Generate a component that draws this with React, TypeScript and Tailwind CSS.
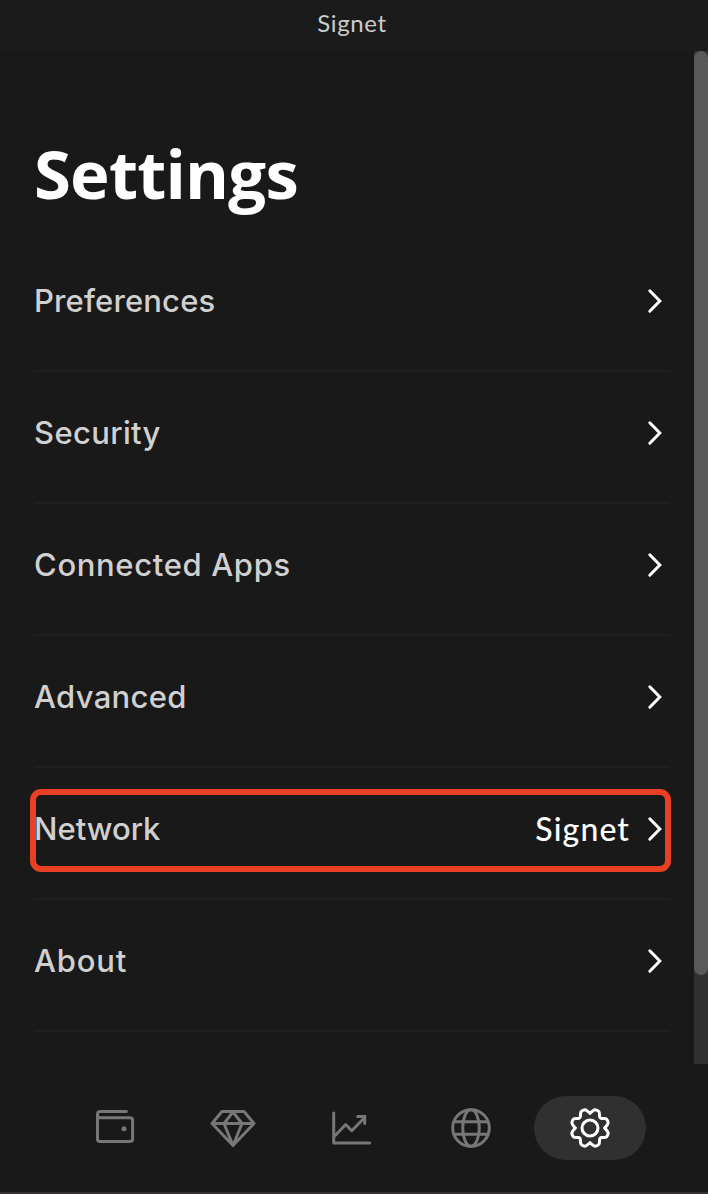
import type { ReactNode } from "react";

const rows = [
  { label: "Preferences", cls: "tracking-[0.15px]" },
  { label: "Security", cls: "tracking-[0.35px]" },
  { label: "Connected Apps", cls: "tracking-[0.65px]" },
  { label: "Advanced", cls: "tracking-[0.3px]" },
  { label: "Network", cls: "tracking-[0px]", value: "Signet" },
  { label: "About", cls: "tracking-[0.8px]" },
];

function Chevron() {
  return (
    <svg className="h-[26px] w-4" viewBox="0 0 16 26" fill="none" stroke="#fff" strokeWidth="3" strokeLinecap="round">
      <path d="M2.8 2.8 12.8 13 2.8 23.2" />
    </svg>
  );
}

function Icon({ children, active = false }: { children: ReactNode; active?: boolean }) {
  return (
    <svg
      className={active ? "size-12 text-white" : "size-12 text-[#777777]"}
      viewBox="-24 -24 48 48"
      fill="none"
      stroke="currentColor"
      strokeWidth="3"
      strokeLinecap="round"
      strokeLinejoin="round"
    >
      {children}
    </svg>
  );
}

const quarter =
  "M0-14.8 L3.2-17.4 Q4.7-18.6 6.4-17.9 L7.6-17.4 Q9.3-16.7 9.4-14.8 L9.6-11.6 Q9.8-9.8 11.6-9.6 L14.8-9.4 Q16.7-9.3 17.4-7.6 L17.9-6.4 Q18.6-4.7 17.4-3.2 L14.8 0";

export default function App() {
  return (
    <div className="flex h-[1194px] w-[708px] flex-col overflow-hidden bg-[#191919] font-['Inter',sans-serif]">
      <header className="flex h-[51px] items-center justify-center bg-[#1b1b1b] pb-[5px] pr-1">
        <span className="font-['Lato',sans-serif] text-[24px] leading-8 tracking-[0.6px] text-[#cccccc]">Signet</span>
      </header>
      <div className="flex h-[1013px]">
        <main className="w-[694px] pl-[34px] pr-[24px]">
          <h1 className="h-[189px] pt-[74px] font-['Open_Sans',sans-serif] text-[67px] font-bold leading-[96px] tracking-[-0.8px] text-white">
            <span>Settings</span>
          </h1>
          {rows.map((r) => (
            <div key={r.label} className="relative flex h-[132px] items-center justify-between border-b-2 border-[#1f1f1f] pb-2 pr-[7px] text-[31px] font-medium leading-10 text-[#d0d0d0]">
              <span className={r.cls}>{r.label}</span>
              <div className="flex items-center gap-[17px]">
                {r.value && <span className="font-['Lato',sans-serif] text-[32px] font-medium tracking-[1.1px] text-white">{r.value}</span>}
                <Chevron />
              </div>
              {r.value && <div className="absolute -left-1 -right-[1px] top-[21px] h-[83px] rounded-[11px] border-[6px] border-[#e93f24]" />}
            </div>
          ))}
        </main>
        <div className="w-[14px] bg-[#303030]">
          <div className="h-[924px] rounded-[7px] bg-[#595959]" />
        </div>
      </div>
      <nav className="flex h-[128px] items-center pl-[55px]">
        <div className="flex w-[118px] justify-center"><Icon>
          <path d="M12.4-16.5H-13.7Q-16.5-16.5-16.5-13.7V11.3Q-16.5 13.6-13.7 13.6H15.8Q18.6 13.6 18.6 11.3V-8Q18.6-10.3 15.8-10.3H-13.7Q-16.5-10.3-16.5-13.1" />
          <circle cx="10" cy="0.8" r="2.5" fill="currentColor" stroke="none" />
        </Icon></div>
        <div className="flex w-[119px] justify-center"><Icon>
          <path d="M-11-16.5H11L21-4.5 0 17.5-21-4.5ZM-21-4.5H21M0-16-9-4.5 0 17.5 9-4.5Z" />
        </Icon></div>
        <div className="flex w-[119px] justify-center"><Icon>
          <path d="M-18.3-15V15H17.7M-17.3 8-6.3-3.5-0.3 2.7 11.7-9.5" />
          <path d="M5.7-11.5H12.7V-4.5" strokeLinejoin="miter" />
        </Icon></div>
        <div className="flex w-[119px] justify-center"><Icon>
          <circle r="18.3" />
          <ellipse rx="8.3" ry="18.3" />
          <path d="M-17-6.2H17M-17 6.2H17" />
        </Icon></div>
        <div className="ml-1 flex h-16 w-28 items-center justify-center rounded-full bg-[#303030]"><Icon active>
          <circle r="8" />
          <path d={quarter} />
          <path d={quarter} transform="rotate(90)" />
          <path d={quarter} transform="rotate(180)" />
          <path d={quarter} transform="rotate(270)" />
        </Icon></div>
      </nav>
      <div className="h-[2px] bg-[#333031]" />
    </div>
  );
}
